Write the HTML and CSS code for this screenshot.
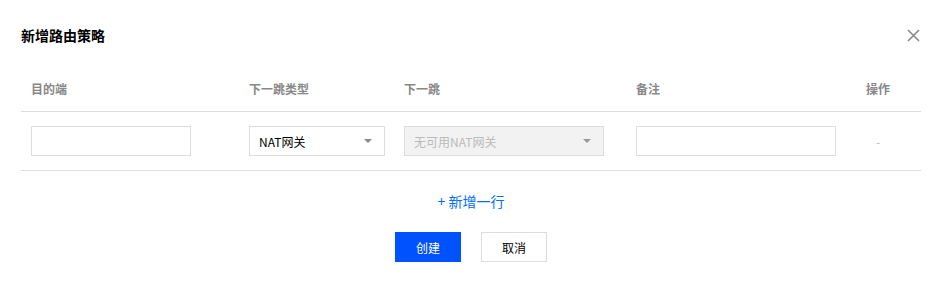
FILE: index.html
```html
<!DOCTYPE html>
<html>
<head>
    <title>新增路由策略</title>
    <link rel="stylesheet" href="styles.css">
</head>
<body>
    <div class="dialog">
        <div class="dialog-head">
            <h3 class="dialog-title">新增路由策略</h3>
            <svg class="close" width="13" height="13" viewBox="0 0 13 13">
                <path d="M1 1 L12 12 M12 1 L1 12" stroke="#888" stroke-width="1.6" fill="none"/>
            </svg>
        </div>

        <table class="route-table">
            <colgroup>
                <col style="width: 218px">
                <col style="width: 155px">
                <col style="width: 232px">
                <col style="width: 230px">
                <col style="width: 65px">
            </colgroup>
            <thead>
                <tr>
                    <th>目的端</th>
                    <th>下一跳类型</th>
                    <th>下一跳</th>
                    <th>备注</th>
                    <th>操作</th>
                </tr>
            </thead>
            <tbody>
                <tr>
                    <td><div class="input input-sm"></div></td>
                    <td>
                        <div class="select select-sm">
                            <span>NAT网关</span>
                            <svg width="8" height="4" viewBox="0 0 8 4"><path d="M0 0 L8 0 L4 4 Z" fill="#888"/></svg>
                        </div>
                    </td>
                    <td>
                        <div class="select select-lg disabled">
                            <span>无可用NAT网关</span>
                            <svg width="8" height="4" viewBox="0 0 8 4"><path d="M0 0 L8 0 L4 4 Z" fill="#999"/></svg>
                        </div>
                    </td>
                    <td><div class="input input-lg"></div></td>
                    <td class="op">-</td>
                </tr>
            </tbody>
        </table>

        <div class="add-row"><a href="#">+ 新增一行</a></div>

        <div class="dialog-foot">
            <button class="btn btn-primary">创建</button>
            <button class="btn">取消</button>
        </div>
    </div>
</body>
</html>
```

FILE: styles.css
```css
body { margin: 0; font-family: "Noto Sans CJK SC", "Liberation Sans", sans-serif; font-size: 12px; color: #000; background: #fff; }
.dialog { padding: 24px 21px 0 21px; width: 900px; }
.dialog-head { display: flex; justify-content: space-between; align-items: center; height: 22px; }
.dialog-title { margin: 0; font-size: 14px; font-weight: bold; line-height: 22px; }
.close { margin-right: 1px; }

.route-table { width: 900px; margin-top: 21px; border-collapse: collapse; table-layout: fixed; }
.route-table th { text-align: left; padding: 12px 10px; line-height: 20px; font-weight: bold; color: #888; border-bottom: 1px solid #ddd; }
.route-table td { padding: 14px 10px; border-bottom: 1px solid #ddd; vertical-align: middle; }
.route-table td.op { color: #bbb; padding-left: 20px; }

.input, .select { box-sizing: border-box; height: 30px; border: 1px solid #ddd; background: #fff; }
.input-sm { width: 160px; }
.input-lg { width: 200px; }
.select { display: flex; align-items: center; justify-content: space-between; padding: 0 12px 0 9px; }
.select-sm { width: 136px; }
.select-lg { width: 200px; }
.select.disabled { background: #f2f2f2; color: #bbb; }

.add-row { text-align: center; margin-top: 20px; line-height: 20px; font-size: 14px; }
.add-row a { color: #006eff; text-decoration: none; }

.dialog-foot { display: flex; justify-content: center; gap: 20px; margin-top: 21px; }
.btn { box-sizing: border-box; width: 66px; height: 30px; border: 1px solid #ddd; background: #fff; color: #000; font-family: inherit; font-size: 12px; padding: 0; cursor: pointer; }
.btn-primary { background: #0052ff; border-color: #0052ff; color: #fff; }
```
